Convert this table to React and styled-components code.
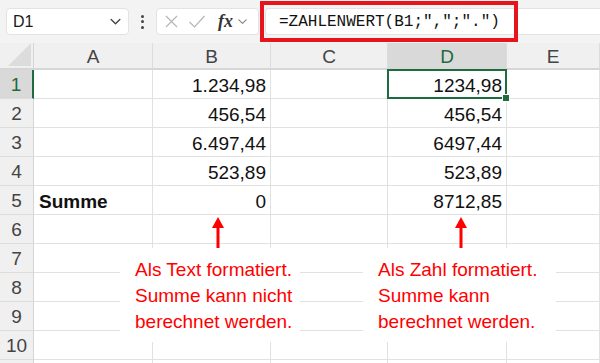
import React from 'react'
import styled, { createGlobalStyle } from 'styled-components'

const GlobalStyle = createGlobalStyle`
  html, body {
    margin: 0;
    padding: 0;
    background: #f3f3f3;
    overflow: hidden;
  }
  body {
    font-family: "Liberation Sans", Arial, sans-serif;
  }
`

const Page = styled.div`
  width: 600px;
  height: 363px;
  position: relative;
  overflow: hidden;
  background: #f3f3f3;
`

const Toolbar = styled.div`
  height: 43px;
  display: flex;
  align-items: center;
  padding-left: 6px;
  box-sizing: border-box;
  position: relative;
`

const NameBox = styled.div`
  width: 123px;
  height: 27px;
  box-sizing: border-box;
  background: #fff;
  border: 1px solid #e3e3e3;
  border-radius: 4px;
  display: flex;
  align-items: center;
  justify-content: space-between;
  padding: 0 6px 0 6px;
  font-size: 16px;
  color: #1a1a1a;
`

const Dots = styled.div`
  width: 27px;
  display: flex;
  flex-direction: column;
  align-items: center;
  gap: 2.5px;
  span {
    width: 3px;
    height: 3px;
    border-radius: 50%;
    background: #444;
  }
`

const FxBox = styled.div`
  width: 103px;
  height: 27px;
  box-sizing: border-box;
  background: #fff;
  border: 1px solid #e3e3e3;
  border-radius: 4px;
  display: flex;
  align-items: center;
  padding-left: 7px;
  gap: 9px;
`

const Fx = styled.span`
  font-family: "Liberation Serif", "Times New Roman", serif;
  font-style: italic;
  font-weight: bold;
  font-size: 18px;
  color: #333;
  margin-left: 3px;
  margin-right: -5px;
`

const FormulaBar = styled.div`
  flex: 1;
  height: 27px;
  margin-left: 6px;
  box-sizing: border-box;
  background: #fff;
  border: 1px solid #e3e3e3;
  border-right: none;
  border-radius: 4px 0 0 4px;
  display: flex;
  align-items: center;
  padding-left: 13px;
  font-family: "Liberation Mono", "DejaVu Sans Mono", monospace;
  font-size: 16px;
  color: #111;
`

const RedFrame = styled.div`
  position: absolute;
  left: 260px;
  top: 1px;
  width: 258px;
  height: 41px;
  box-sizing: border-box;
  border: 4px solid #e8141c;
  pointer-events: none;
`

const Sheet = styled.div`
  position: relative;
  display: grid;
  grid-template-columns: 34px 119px 118px 117px 119px 1fr;
  grid-template-rows: 27px repeat(11, 29px);
  background: #fff;
`

const Corner = styled.div`
  background: #f0f0f0;
  border-right: 1px solid #d4d4d4;
  border-bottom: 2px solid #d6d6d6;
  box-sizing: border-box;
  display: flex;
  align-items: flex-end;
  justify-content: flex-end;
  padding: 0 2px 2px 0;
`

const ColHead = styled.div`
  background: ${({ $active }) => ($active ? '#d9d9d9' : '#f0f0f0')};
  color: ${({ $active }) => ($active ? '#1d6b3e' : '#444')};
  border-right: 1px solid #dcdcdc;
  border-bottom: 2px solid #d6d6d6;
  box-sizing: border-box;
  display: flex;
  align-items: center;
  justify-content: center;
  padding-top: 2px;
  font-size: 19px;
`

const RowHead = styled.div`
  background: ${({ $active }) => ($active ? '#d9d9d9' : '#f0f0f0')};
  color: ${({ $active }) => ($active ? '#1d6b3e' : '#444')};
  border-right: ${({ $active }) => ($active ? '2px solid #1d6b3e' : '1px solid #d4d4d4')};
  border-bottom: 1px solid #dcdcdc;
  box-sizing: border-box;
  display: flex;
  align-items: center;
  justify-content: center;
  padding-top: 2px;
  font-size: 19px;
`

const Cell = styled.div`
  position: relative;
  border-right: 1px solid #e1e1e1;
  border-bottom: 1px solid #e1e1e1;
  box-sizing: border-box;
  display: flex;
  align-items: center;
  justify-content: ${({ $num }) => ($num ? 'flex-end' : 'flex-start')};
  padding: 3px 4px 0 5px;
  font-size: 19px;
  font-weight: ${({ $bold }) => ($bold ? 'bold' : 'normal')};
  color: #111;
  white-space: nowrap;

  ${({ $selected }) =>
    $selected &&
    `
    &::after {
      content: '';
      position: absolute;
      left: -1px;
      top: -1px;
      right: -1px;
      bottom: -1px;
      border: 2px solid #1d6b3e;
    }
    &::before {
      content: '';
      position: absolute;
      right: -4px;
      bottom: -4px;
      width: 6px;
      height: 6px;
      background: #1d6b3e;
      border: 1px solid #fff;
      z-index: 2;
    }
  `}
`

const Note = styled.div`
  position: absolute;
  left: ${({ $left }) => $left}px;
  top: 205px;
  width: ${({ $width }) => $width}px;
  height: 94px;
  box-sizing: border-box;
  background: #fff;
  padding: 9px 0 0 15px;
  color: #ff0000;
  font-size: 19px;
  line-height: 26px;
`

const Arrow = styled.svg`
  position: absolute;
  left: ${({ $left }) => $left}px;
  top: 174px;
`

const cols = ['A', 'B', 'C', 'D', 'E']

const data = [
  ['', '1.234,98', '', '1234,98', ''],
  ['', '456,54', '', '456,54', ''],
  ['', '6.497,44', '', '6497,44', ''],
  ['', '523,89', '', '523,89', ''],
  ['Summe', '0', '', '8712,85', ''],
]

const ChevronDown = ({ size = 12, color = '#444' }) => (
  <svg width={size} height={size} viewBox="0 0 12 12">
    <path d="M2 4.2 L6 8 L10 4.2" fill="none" stroke={color} strokeWidth="1.3" strokeLinecap="round" strokeLinejoin="round" />
  </svg>
)

const UpArrow = ({ left }) => (
  <Arrow $left={left} width="12" height="31" viewBox="0 0 12 31">
    <polygon points="6,0 12,11 0,11" fill="#ff0000" />
    <rect x="4.5" y="10" width="3" height="21" fill="#ff0000" />
  </Arrow>
)

const App = () => {
  // row 11 is only a sliver at the bottom edge, so its number is left out
  const rows = Array.from({ length: 11 }, (_, i) => data[i] || ['', '', '', '', ''])

  return (
    <Page>
      <GlobalStyle />
      <Toolbar>
        <NameBox>
          D1
          <ChevronDown size={13} />
        </NameBox>
        <Dots>
          <span />
          <span />
          <span />
        </Dots>
        <FxBox>
          <svg width="15" height="15" viewBox="0 0 15 15">
            <path d="M2 2 L13 13 M13 2 L2 13" stroke="#b5b5b5" strokeWidth="1.2" fill="none" />
          </svg>
          <svg width="18" height="15" viewBox="0 0 18 15">
            <path d="M1.5 8 L6.5 13 L16.5 2" stroke="#b5b5b5" strokeWidth="1.2" fill="none" />
          </svg>
          <Fx>fx</Fx>
          <ChevronDown size={11} color="#888" />
        </FxBox>
        <FormulaBar>=ZAHLENWERT(B1;",";".")</FormulaBar>
        <RedFrame />
      </Toolbar>

      <Sheet>
        <Corner>
          <svg width="23" height="23" viewBox="0 0 23 23">
            <polygon points="23,0 23,23 0,23" fill="#dcdcdc" />
          </svg>
        </Corner>
        {cols.map((c) => (
          <ColHead key={c} $active={c === 'D'}>{c}</ColHead>
        ))}
        {rows.map((r, i) => (
          <React.Fragment key={i}>
            <RowHead $active={i === 0}>{i < 10 ? i + 1 : ''}</RowHead>
            {r.map((v, j) => (
              <Cell
                key={j}
                $num={j > 0}
                $bold={j === 0 && v !== ''}
                $selected={i === 0 && j === 3}
              >
                {v}
              </Cell>
            ))}
          </React.Fragment>
        ))}

        <UpArrow left={212} />
        <UpArrow left={455} />
        <Note $left={120} $width={180}>
          Als Text formatiert.
          <br />
          Summe kann nicht
          <br />
          berechnet werden.
        </Note>
        <Note $left={363} $width={193}>
          Als Zahl formatiert.
          <br />
          Summe kann
          <br />
          berechnet werden.
        </Note>
      </Sheet>
    </Page>
  )
}

export default App
